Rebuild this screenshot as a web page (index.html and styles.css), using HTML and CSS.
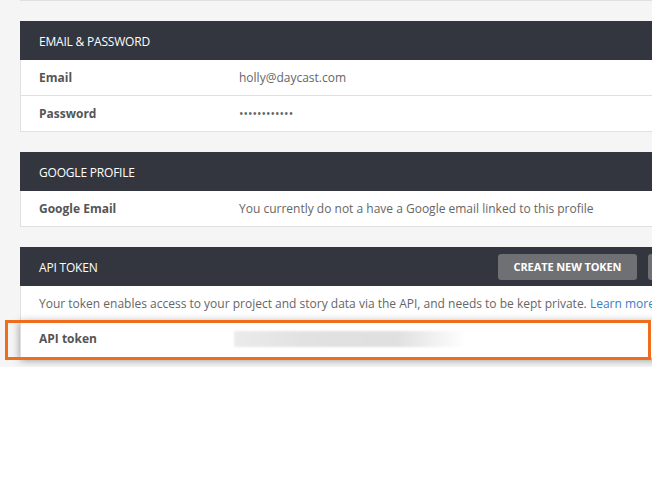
FILE: index.html
```html
<!DOCTYPE html>
<html>
<head>
<meta charset="utf-8">
<link rel="stylesheet" href="styles.css">
</head>
<body>
<div class="page">
  <div class="stub"></div>

  <section class="card">
    <header class="card-head"><span class="title">EMAIL &amp; PASSWORD</span></header>
    <div class="row"><span class="label">Email</span><span class="value">holly@daycast.com</span></div>
    <div class="row"><span class="label">Password</span><span class="value">••••••••••••</span></div>
  </section>

  <section class="card">
    <header class="card-head"><span class="title">GOOGLE PROFILE</span></header>
    <div class="row"><span class="label">Google Email</span><span class="value">You currently do not a have a Google email linked to this profile</span></div>
  </section>

  <section class="card">
    <header class="card-head">
      <span class="title">API TOKEN</span>
      <div class="actions">
        <button class="btn">CREATE NEW TOKEN</button>
        <button class="btn btn-second">REVOKE</button>
      </div>
    </header>
    <div class="row desc"><p class="desc-text">Your token enables access to your project and story data via the API, and needs to be kept private. <a class="link">Learn more</a></p></div>
    <div class="row raised"><span class="label">API token</span><span class="token"></span></div>
  </section>
</div>
<div class="highlight"></div>
</body>
</html>
```

FILE: styles.css
```css
* { box-sizing: border-box; }
html, body { margin: 0; padding: 0; background: #ffffff; }
body {
  font-family: "Open Sans", "Liberation Sans", sans-serif;
  font-size: 12px;
  color: #666;
  width: 652px;
  height: 489px;
  overflow: hidden;
  position: relative;
}
.page {
  background: #f5f5f5;
  height: 367px;
  padding-left: 20px;
  overflow: hidden;
}
.stub {
  width: 728px;
  height: 1px;
  background: #e0e0e0;
  margin-bottom: 20px;
}
.card {
  width: 728px;
  margin-bottom: 20px;
  background: #fff;
}
.card-head {
  height: 39px;
  background: #33363e;
  color: #fff;
  display: flex;
  align-items: center;
  padding: 1px 10px 0 19px;
}
.title { flex: 1; letter-spacing: -0.2px; }
.actions { display: flex; gap: 11px; margin-top: -1px; }
.btn {
  font-family: "Open Sans", "Liberation Sans", sans-serif;
  font-size: 11px;
  font-weight: 700;
  color: #fff;
  background: #6f7074;
  border: 0;
  border-radius: 3px;
  height: 26px;
  width: 139px;
  padding: 0;
  letter-spacing: -0.1px;
}
.btn-second { width: 90px; }
.row {
  display: flex;
  align-items: center;
  height: 36px;
  padding-left: 18px;
  border-left: 1px solid #e0e0e0;
  border-bottom: 1px solid #e0e0e0;
  background: #fff;
}
.label {
  width: 200px;
  font-weight: 700;
  color: #555;
  flex: none;
}
.value { white-space: nowrap; }
.desc { height: 34px; border-bottom: 0; }
.desc-text { margin: 0; white-space: nowrap; }
.link { color: #3b7dc4; }
.raised {
  height: 38px;
  position: relative;
  box-shadow: 0 2px 8px rgba(0, 0, 0, 0.4);
}
.token {
  display: block;
  margin-left: -5px;
  width: 232px;
  height: 16px;
  background: linear-gradient(to right, #ebebeb, #e2e2e2 30%, #e0e0e0 70%, rgba(255,255,255,0) 100%);
  filter: blur(1px);
}
.highlight {
  position: absolute;
  left: 5px;
  top: 320px;
  width: 646px;
  height: 40px;
  border: 3px solid #ef6d1c;
}
```
